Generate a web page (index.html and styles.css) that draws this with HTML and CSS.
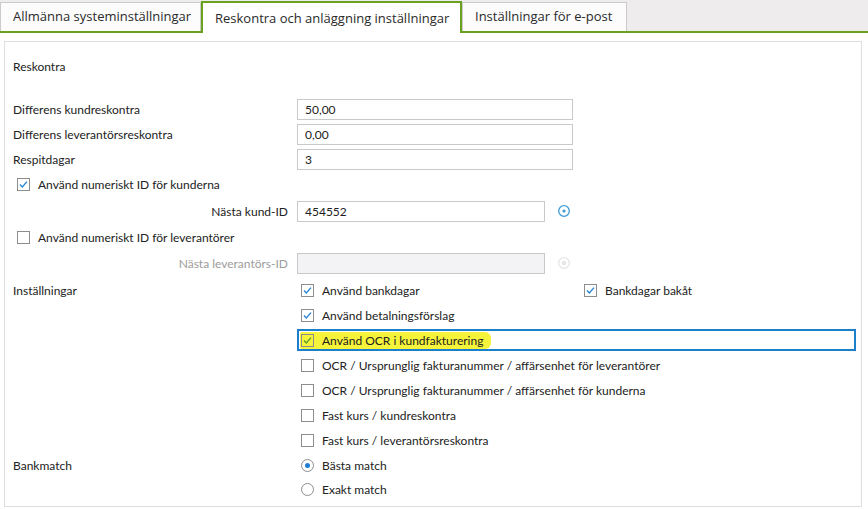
FILE: index.html
```html
<!DOCTYPE html>
<html lang="sv">
<head>
<meta charset="utf-8">
<title>Reskontra</title>
<link rel="stylesheet" href="styles.css">
</head>
<body>
<div class="tabbar">
  <div class="tab t1">Allmänna systeminställningar</div>
  <div class="tab t2 active">Reskontra och anläggning inställningar</div>
  <div class="tab t3">Inställningar för e-post</div>
</div>
<div class="panel">
  <div class="section-title">Reskontra</div>
  <div class="form">
    <div class="row">
      <div class="lbl">Differens kundreskontra</div>
      <div class="input wide">50,00</div>
    </div>
    <div class="row">
      <div class="lbl">Differens leverantörsreskontra</div>
      <div class="input wide">0,00</div>
    </div>
    <div class="row">
      <div class="lbl">Respitdagar</div>
      <div class="input wide">3</div>
    </div>
    <div class="row">
      <div class="check left"><span class="cb"><svg viewBox="0 0 11 11"><path d="M2 5.6 L4.3 8 L9 2.6"/></svg></span>Använd numeriskt ID för kunderna</div>
    </div>
    <div class="row tall">
      <div class="lbl right">Nästa kund-ID</div>
      <div class="input short">454552</div>
      <span class="target"><svg viewBox="0 0 14 14"><circle cx="7" cy="7" r="5.3"/><circle class="dot" cx="7" cy="7" r="1.6"/></svg></span>
    </div>
    <div class="row short-row">
      <div class="check left"><span class="cb"></span>Använd numeriskt ID för leverantörer</div>
    </div>
    <div class="row tall">
      <div class="lbl right disabled">Nästa leverantörs-ID</div>
      <div class="input short off"></div>
      <span class="target off"><svg viewBox="0 0 14 14"><circle cx="7" cy="7" r="5.3"/><circle class="dot" cx="7" cy="7" r="1.6"/></svg></span>
    </div>
    <div class="row top settings">
      <div class="lbl">Inställningar</div>
      <div class="opts">
        <div class="opt pair">
          <div class="check"><span class="cb"><svg viewBox="0 0 11 11"><path d="M2 5.6 L4.3 8 L9 2.6"/></svg></span>Använd bankdagar</div>
          <div class="check"><span class="cb"><svg viewBox="0 0 11 11"><path d="M2 5.6 L4.3 8 L9 2.6"/></svg></span>Bankdagar bakåt</div>
        </div>
        <div class="opt"><div class="check"><span class="cb"><svg viewBox="0 0 11 11"><path d="M2 5.6 L4.3 8 L9 2.6"/></svg></span>Använd betalningsförslag</div></div>
        <div class="opt hl"><div class="check marker"><span class="cb"><svg viewBox="0 0 11 11"><path d="M2 5.6 L4.3 8 L9 2.6"/></svg></span>Använd OCR i kundfakturering</div></div>
        <div class="opt"><div class="check"><span class="cb"></span>OCR / Ursprunglig fakturanummer / affärsenhet för leverantörer</div></div>
        <div class="opt"><div class="check"><span class="cb"></span>OCR / Ursprunglig fakturanummer / affärsenhet för kunderna</div></div>
        <div class="opt"><div class="check"><span class="cb"></span>Fast kurs / kundreskontra</div></div>
        <div class="opt"><div class="check"><span class="cb"></span>Fast kurs / leverantörsreskontra</div></div>
      </div>
    </div>
    <div class="row top">
      <div class="lbl">Bankmatch</div>
      <div class="opts">
        <div class="opt first"><div class="check"><span class="rb on"></span>Bästa match</div></div>
        <div class="opt last"><div class="check"><span class="rb"></span>Exakt match</div></div>
      </div>
    </div>
  </div>
</div>
</body>
</html>
```

FILE: styles.css
```css
* { box-sizing: border-box; }

body {
  margin: 0;
  background: #ffffff;
  color: #222222;
  font-family: "Lato", "Open Sans", "DejaVu Sans", sans-serif;
  font-size: 12px;
}

.tabbar {
  display: flex;
  align-items: flex-end;
  height: 33px;
  background: #eeecec;
  border-bottom: 2px solid #6aa121;
  font-family: "Open Sans", "Noto Sans", sans-serif;
}

.tab {
  height: 29px;
  line-height: 27px;
  border: 1px solid #cbcbcb;
  border-bottom: none;
  background: #fcfcfc;
  font-size: 13px;
  color: #2a2a2a;
  white-space: nowrap;
}

.t1 { width: 201px; padding-left: 12px; }
.t3 { width: 165px; padding-left: 12px; }

.tab.active {
  position: relative;
  width: 261px;
  height: 32px;
  margin-bottom: -2px;
  padding-left: 12px;
  line-height: 30px;
  border: 2px solid #6aa121;
  border-bottom: none;
  background: #ffffff;
}

.panel {
  margin: 8px 6px 0 4px;
  height: 466px;
  border: 1px solid #dedede;
  padding-left: 8px;
}

.section-title {
  height: 50px;
  line-height: 50px;
  margin-bottom: 5px;
}

.row {
  display: flex;
  align-items: center;
  height: 25px;
}

.row.tall { height: 28px; }
.row.short-row { height: 24px; }
.row.top { align-items: flex-start; height: auto; }
.row.settings { margin-top: 1px; }

.lbl {
  flex: none;
  width: 284px;
  line-height: 25px;
}

.lbl.right {
  text-align: right;
  padding-right: 9px;
}

.lbl.disabled { color: #9c9c9c; }

.input {
  height: 21px;
  line-height: 19px;
  border: 1px solid #c9c9c9;
  padding-left: 7px;
  background: #ffffff;
}

.input.wide { width: 276px; }
.input.short { width: 248px; }
.input.off { background: #f3f2f4; }

.target {
  display: flex;
  width: 14px;
  height: 14px;
  margin-left: 12px;
}

.target svg { width: 14px; height: 14px; }
.target circle { fill: none; stroke: #3d9bd8; stroke-width: 1.3; }
.target circle.dot { fill: #3d9bd8; stroke: none; }
.target.off circle { stroke: #e6e6e6; }
.target.off circle.dot { fill: #e6e6e6; }

.check {
  display: flex;
  align-items: center;
  white-space: nowrap;
}

.check.left { padding-left: 4px; }

.cb {
  flex: none;
  display: flex;
  align-items: center;
  justify-content: center;
  width: 13px;
  height: 13px;
  margin-right: 8px;
  border: 1px solid #8d8d8d;
  background: #ffffff;
}

.cb svg { width: 11px; height: 11px; }
.cb path { fill: none; stroke: #2b86d6; stroke-width: 1.4; }

.rb {
  flex: none;
  width: 13px;
  height: 13px;
  margin-right: 8px;
  border: 1px solid #8d8d8d;
  border-radius: 50%;
  background: #ffffff;
  display: flex;
  align-items: center;
  justify-content: center;
}

.rb.on::after {
  content: "";
  width: 5px;
  height: 5px;
  border-radius: 50%;
  background: #1f7dd4;
}

.opts {
  flex: 1;
  display: flex;
  flex-direction: column;
}

.opt {
  height: 25px;
  display: flex;
  align-items: center;
  padding-left: 4px;
}

.opt.first { height: 24px; }
.opt.last { height: 24px; }

.opt.pair .check:first-child { width: 283px; }

.opt.hl {
  height: 22px;
  margin: 1px 5px 2px 0;
  padding-left: 1px;
  border: 2px solid #1b80c9;
}

.check.marker {
  height: 17px;
  padding: 0 8px 0 1px;
  background: #f6f43a;
  border-radius: 2px 6px 6px 2px;
}

.check.marker .cb { background: transparent; }
.check.marker .cb path { stroke: #5a9d2c; }
```
